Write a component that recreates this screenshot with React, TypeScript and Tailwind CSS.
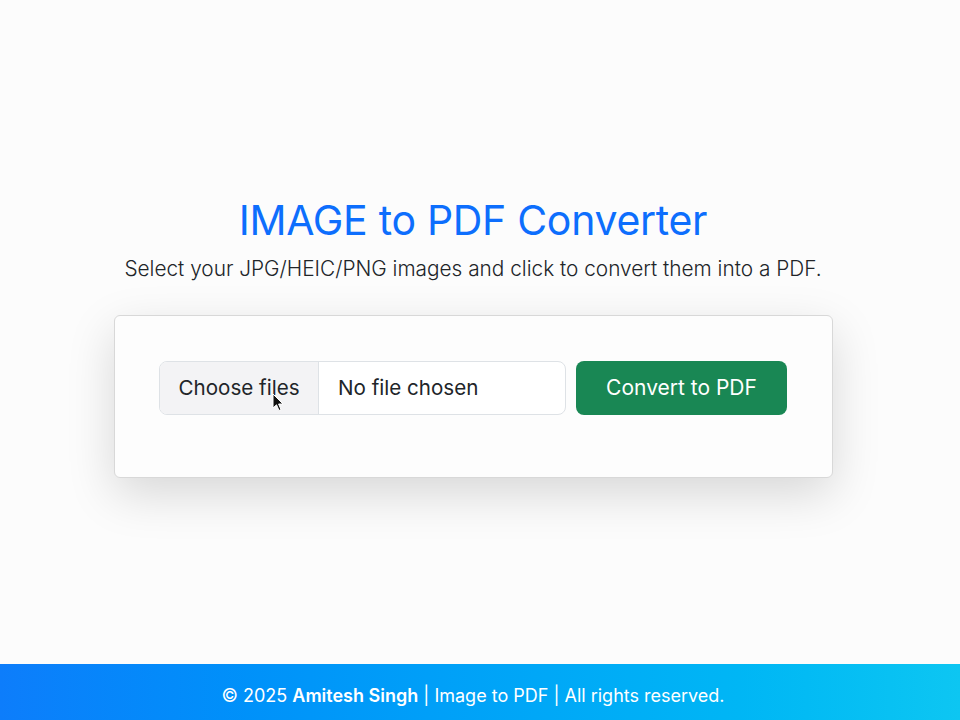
export default function App() {
  return (
    <div
      className="flex min-h-screen flex-col bg-[#fcfcfc] text-[#212529]"
      style={{ fontFamily: "Inter, 'Open Sans', sans-serif" }}
    >
      <main className="flex h-[664px] flex-col items-center pr-[14px] pt-[196px]">
        <h1 className="text-[41px] font-normal leading-[48px] tracking-[-0.3px] text-[#0d6efd]">
          IMAGE to PDF Converter
        </h1>
        <p className="mt-[10px] text-[20.8px] font-light leading-[30px] text-[#212529]">
          Select your JPG/HEIC/PNG images and click to convert them into a PDF.
        </p>
        <div className="mt-[31px] flex h-[163px] w-[719px] items-start justify-center gap-[10px] rounded-[6px] border border-[#d8d8d8] bg-[#fdfdfd] pt-[45px] shadow-[0_16px_48px_rgba(0,0,0,0.15)]">
          <div className="relative flex h-[54px] w-[407px] overflow-hidden rounded-[8px] border border-[#dee2e6] bg-white text-[20.6px]">
            <div className="flex w-[159px] items-center justify-center border-r border-[#dee2e6] bg-[#f3f3f5]">
              Choose files
            </div>
            <div className="flex items-center pl-[19px]">No file chosen</div>
            <svg
              className="absolute left-[112px] top-[31px]"
              width="12"
              height="19"
              viewBox="0 0 12 19"
            >
              <path
                d="M1 1 L1 15 L4.5 11.8 L7 17.5 L9 16.6 L6.6 11 L11 11 Z"
                fill="#111"
                stroke="#fff"
                strokeWidth="1"
                strokeLinejoin="round"
              />
            </svg>
          </div>
          <button className="h-[54px] w-[211px] rounded-[8px] bg-[#198754] text-[21px] text-white">
            Convert to PDF
          </button>
        </div>
      </main>
      <footer className="flex h-[56px] items-center justify-center bg-gradient-to-r from-[#0d7dfb] to-[#0dc6f2] pr-[14px] pt-[7px] text-[18px] text-white">
        <span>
          © 2025 <span className="font-semibold">Amitesh Singh</span> | Image to PDF | All rights reserved.
        </span>
      </footer>
    </div>
  );
}
